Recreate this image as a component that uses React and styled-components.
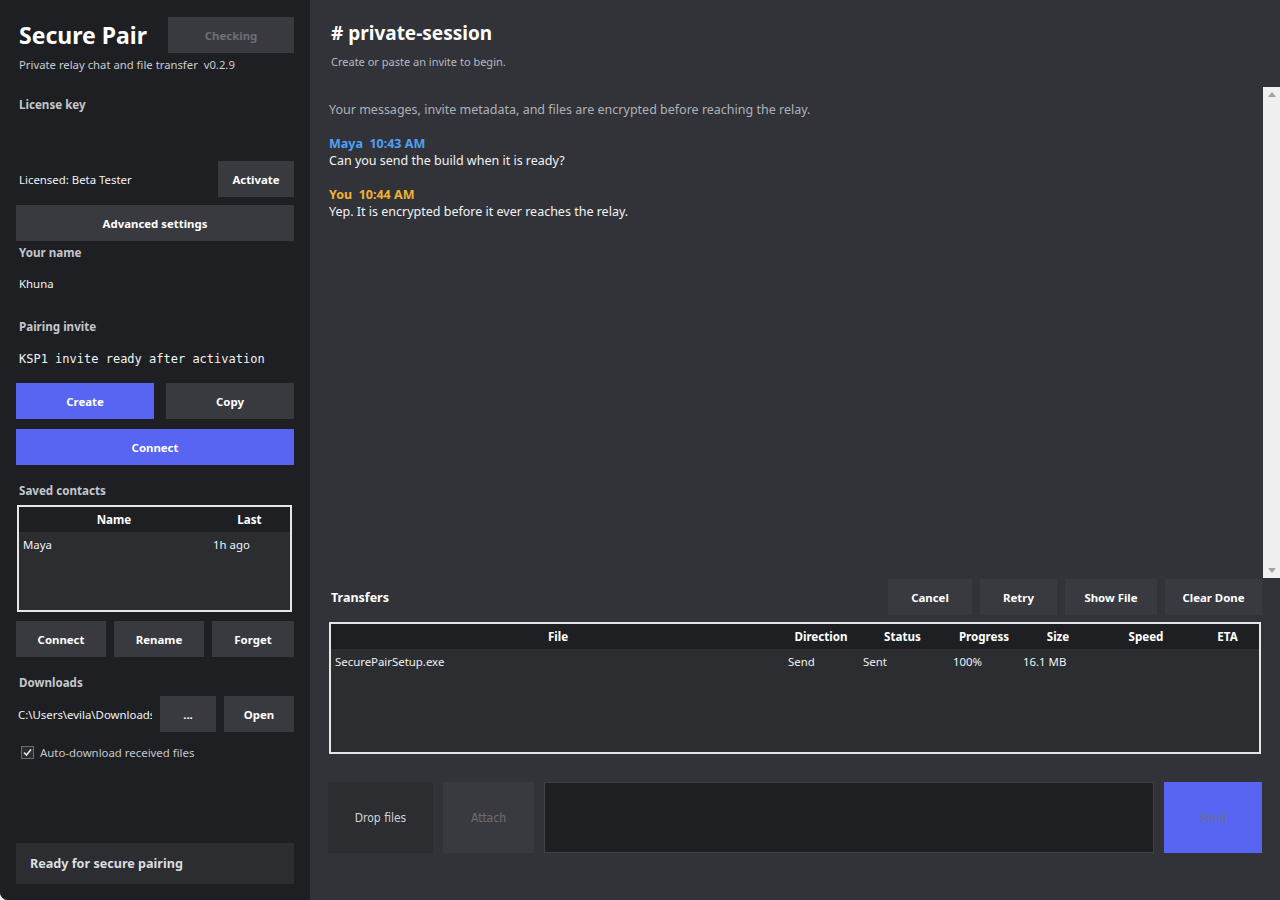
import React from "react"
import styled, { createGlobalStyle } from "styled-components"

const GlobalStyle = createGlobalStyle`
  html, body {
    margin: 0;
    padding: 0;
    background: #f0f0f0;
  }
  body {
    font-family: "Noto Sans", "Open Sans", sans-serif;
    font-size: 12px;
    color: #f2f3f5;
  }
  * {
    box-sizing: border-box;
  }
`

const StyledWindow = styled.div`
  width: 1280px;
  height: 900px;
  display: flex;
  overflow: hidden;
  border-bottom-left-radius: 8px;
  background: #313338;
`

const StyledSidebar = styled.aside`
  width: 310px;
  flex-shrink: 0;
  background: #1e1f22;
  padding: 17px 16px 16px;
  display: flex;
  flex-direction: column;
`

const StyledTitleRow = styled.div`
  display: flex;
  justify-content: space-between;
  align-items: center;
`

const StyledTitle = styled.h1`
  margin: 0 0 0 3px;
  font-size: 23px;
  font-weight: 700;
  color: #ffffff;
`

const StyledSubtitle = styled.div`
  margin: 4px 0 0 3px;
  font-size: 11.3px;
  color: #c9ccd1;
`

const StyledLabel = styled.div`
  margin: ${(p) => p.$m || "0"};
  padding-left: 3px;
  font-size: 11.6px;
  font-weight: 700;
  color: #c4c7cc;
`

const StyledValue = styled.div`
  margin: ${(p) => p.$m || "0"};
  padding-left: 3px;
  font-size: ${(p) => (p.$mono ? "12px" : "11.4px")};
  font-family: ${(p) => (p.$mono ? '"DejaVu Sans Mono", "Liberation Mono", monospace' : "inherit")};
  color: #f2f3f5;
  white-space: nowrap;
  overflow: hidden;
`

const StyledButton = styled.button`
  height: 36px;
  width: ${(p) => p.$w || "auto"};
  flex: ${(p) => (p.$grow ? "1" : "none")};
  border: none;
  margin: 0;
  padding: 0;
  font-family: inherit;
  font-size: 11.4px;
  font-weight: 700;
  color: ${(p) => (p.$muted ? "#6d6f75" : "#ffffff")};
  background: ${(p) => (p.$primary ? "#5865f2" : "#393a40")};
  cursor: pointer;
`

const StyledRow = styled.div`
  display: flex;
  align-items: center;
  gap: ${(p) => p.$gap || "8px"};
  margin: ${(p) => p.$m || "0"};
`

const StyledSpacer = styled.div`
  flex: 1;
`

const StyledTableFrame = styled.div`
  border: 2px solid #e6e6e6;
  background: #2b2d31;
  height: ${(p) => p.$h};
  margin: ${(p) => p.$m || "0"};
  overflow: hidden;
`

const StyledGridRow = styled.div`
  display: grid;
  grid-template-columns: ${(p) => p.$cols};
  height: 25px;
  align-items: center;
  background: ${(p) => (p.$head ? "#1e1f22" : "transparent")};
`

const StyledHeadCell = styled.div`
  text-align: center;
  font-size: 11.6px;
  font-weight: 700;
  color: #ffffff;
`

const StyledCell = styled.div`
  padding-left: ${(p) => p.$pad || "4px"};
  font-size: 11.4px;
  color: #f2f3f5;
  white-space: nowrap;
`

const StyledCheckRow = styled.label`
  display: flex;
  align-items: center;
  gap: 6px;
  margin: 13px 0 0 5px;
  font-size: 11.4px;
  color: #c4c7cc;
`

const StyledCheckbox = styled.span`
  width: 13px;
  height: 13px;
  border: 1px solid #6a6c72;
  background: #2b2d31;
  display: flex;
  align-items: center;
  justify-content: center;
`

const StyledStatus = styled.div`
  margin-top: auto;
  height: 41px;
  background: #2b2d31;
  display: flex;
  align-items: center;
  padding-left: 14px;
  font-size: 12.6px;
  font-weight: 700;
  color: #dbdee1;
`

const StyledMain = styled.main`
  flex: 1;
  display: flex;
  flex-direction: column;
  min-width: 0;
`

const StyledHeader = styled.header`
  padding: 20px 0 0 21px;
  height: 87px;
`

const StyledChannel = styled.h2`
  margin: 0;
  font-size: 19px;
  font-weight: 700;
  color: #ffffff;
`

const StyledHint = styled.div`
  margin-top: 8px;
  font-size: 11px;
  color: #b5bac1;
`

const StyledChatArea = styled.div`
  height: 491px;
  display: flex;
  margin-left: 19px;
`

const StyledMessages = styled.div`
  flex: 1;
  padding-top: 14px;
`

const StyledNotice = styled.div`
  font-size: 12.5px;
  color: #aeb2b8;
  margin-bottom: 17px;
`

const StyledMessage = styled.div`
  margin-bottom: 17px;
`

const StyledAuthor = styled.div`
  font-size: 12.5px;
  font-weight: 700;
  color: ${(p) => p.$color};
  line-height: 17px;
`

const StyledText = styled.div`
  font-size: 12.5px;
  color: #f2f3f5;
  line-height: 17px;
`

const StyledScrollbar = styled.div`
  width: 17px;
  background: #f0f0f0;
  display: flex;
  flex-direction: column;
  justify-content: space-between;
  align-items: center;
  padding: 5px 0;
`

const StyledArrow = styled.span`
  width: 0;
  height: 0;
  border-left: 4px solid transparent;
  border-right: 4px solid transparent;
  ${(p) =>
    p.$down
      ? "border-top: 5px solid #a3a3a3;"
      : "border-bottom: 5px solid #a3a3a3;"}
`

const StyledTransfers = styled.section`
  padding: 1px 18px 0 19px;
`

const StyledSectionTitle = styled.div`
  padding-left: 2px;
  font-size: 12.5px;
  font-weight: 700;
  color: #ffffff;
`

const StyledComposer = styled.div`
  display: flex;
  gap: 10px;
  margin: 28px 18px 0 18px;
  height: 71px;
`

const StyledComposeButton = styled.button`
  width: ${(p) => p.$w};
  border: none;
  margin: 0;
  font-family: "DejaVu Sans Condensed", "DejaVu Sans", sans-serif;
  font-stretch: condensed;
  font-size: 12px;
  color: ${(p) => p.$color};
  background: ${(p) => p.$bg};
`

const StyledInput = styled.div`
  flex: 1;
  background: #1e1f22;
  border: 1px solid #3f4147;
`

const transferCols = "454px 72px 91px 72px 76px 100px 1fr"
const contactCols = "190px 1fr"

const CheckIcon = () => (
  <svg width="11" height="11" viewBox="0 0 11 11">
    <path d="M2 5.5 L4.5 8 L9 2.5" fill="none" stroke="#e6e6e6" strokeWidth="1.6" />
  </svg>
)

const Sidebar = () => (
  <StyledSidebar>
    <StyledTitleRow>
      <StyledTitle>Secure Pair</StyledTitle>
      <StyledButton $w="126px" $muted>
        Checking
      </StyledButton>
    </StyledTitleRow>
    <StyledSubtitle>Private relay chat and file transfer&nbsp; v0.2.9</StyledSubtitle>
    <StyledLabel $m="25px 0 0">License key</StyledLabel>
    <StyledRow $m="49px 0 0">
      <StyledValue>Licensed: Beta Tester</StyledValue>
      <StyledSpacer />
      <StyledButton $w="76px">Activate</StyledButton>
    </StyledRow>
    <StyledButton $w="100%" style={{ marginTop: 8 }}>
      Advanced settings
    </StyledButton>
    <StyledLabel $m="4px 0 0">Your name</StyledLabel>
    <StyledValue $m="16px 0 0">Khuna</StyledValue>
    <StyledLabel $m="28px 0 0">Pairing invite</StyledLabel>
    <StyledValue $m="18px 0 0" $mono>
      KSP1 invite ready after activation
    </StyledValue>
    <StyledRow $gap="12px" $m="17px 0 0">
      <StyledButton $w="138px" $primary>
        Create
      </StyledButton>
      <StyledButton $grow>Copy</StyledButton>
    </StyledRow>
    <StyledButton $w="100%" $primary style={{ marginTop: 10 }}>
      Connect
    </StyledButton>
    <StyledLabel $m="18px 0 0">Saved contacts</StyledLabel>
    <StyledTableFrame $h="107px" $m="7px 2px 0 1px">
      <StyledGridRow $head $cols={contactCols}>
        <StyledHeadCell>Name</StyledHeadCell>
        <StyledHeadCell>Last</StyledHeadCell>
      </StyledGridRow>
      <StyledGridRow $cols={contactCols}>
        <StyledCell>Maya</StyledCell>
        <StyledCell $pad="4px">1h ago</StyledCell>
      </StyledGridRow>
    </StyledTableFrame>
    <StyledRow $m="9px 0 0">
      <StyledButton $w="90px">Connect</StyledButton>
      <StyledButton $w="90px">Rename</StyledButton>
      <StyledButton $grow>Forget</StyledButton>
    </StyledRow>
    <StyledLabel $m="18px 0 0">Downloads</StyledLabel>
    <StyledRow $m="6px 0 0">
      <StyledValue style={{ width: 136, paddingLeft: 2 }}>C:\Users\evila\Downloads</StyledValue>
      <StyledButton $w="56px">...</StyledButton>
      <StyledButton $grow>Open</StyledButton>
    </StyledRow>
    <StyledCheckRow>
      <StyledCheckbox>
        <CheckIcon />
      </StyledCheckbox>
      Auto-download received files
    </StyledCheckRow>
    <StyledStatus>Ready for secure pairing</StyledStatus>
  </StyledSidebar>
)

const Chat = () => (
  <StyledChatArea>
    <StyledMessages>
      <StyledNotice>
        Your messages, invite metadata, and files are encrypted before reaching the relay.
      </StyledNotice>
      <StyledMessage>
        <StyledAuthor $color="#4ea1f5">Maya&nbsp; 10:43 AM</StyledAuthor>
        <StyledText>Can you send the build when it is ready?</StyledText>
      </StyledMessage>
      <StyledMessage>
        <StyledAuthor $color="#f0b232">You&nbsp; 10:44 AM</StyledAuthor>
        <StyledText>Yep. It is encrypted before it ever reaches the relay.</StyledText>
      </StyledMessage>
    </StyledMessages>
    <StyledScrollbar>
      <StyledArrow />
      <StyledArrow $down />
    </StyledScrollbar>
  </StyledChatArea>
)

const Transfers = () => (
  <StyledTransfers>
    <StyledRow>
      <StyledSectionTitle>Transfers</StyledSectionTitle>
      <StyledSpacer />
      <StyledButton $w="84px">Cancel</StyledButton>
      <StyledButton $w="77px">Retry</StyledButton>
      <StyledButton $w="92px">Show File</StyledButton>
      <StyledButton $w="97px">Clear Done</StyledButton>
    </StyledRow>
    <StyledTableFrame $h="132px" $m="7px 1px 0 0">
      <StyledGridRow $head $cols={transferCols}>
        <StyledHeadCell>File</StyledHeadCell>
        <StyledHeadCell>Direction</StyledHeadCell>
        <StyledHeadCell>Status</StyledHeadCell>
        <StyledHeadCell>Progress</StyledHeadCell>
        <StyledHeadCell>Size</StyledHeadCell>
        <StyledHeadCell>Speed</StyledHeadCell>
        <StyledHeadCell>ETA</StyledHeadCell>
      </StyledGridRow>
      <StyledGridRow $cols={transferCols}>
        <StyledCell>SecurePairSetup.exe</StyledCell>
        <StyledCell $pad="3px">Send</StyledCell>
        <StyledCell $pad="6px">Sent</StyledCell>
        <StyledCell $pad="5px">100%</StyledCell>
        <StyledCell $pad="3px">16.1 MB</StyledCell>
        <StyledCell />
        <StyledCell />
      </StyledGridRow>
    </StyledTableFrame>
  </StyledTransfers>
)

const App = () => (
  <>
    <GlobalStyle />
    <StyledWindow>
      <Sidebar />
      <StyledMain>
        <StyledHeader>
          <StyledChannel># private-session</StyledChannel>
          <StyledHint>Create or paste an invite to begin.</StyledHint>
        </StyledHeader>
        <Chat />
        <Transfers />
        <StyledComposer>
          <StyledComposeButton $w="105px" $bg="#2b2d31" $color="#d0d3d8">
            Drop files
          </StyledComposeButton>
          <StyledComposeButton $w="91px" $bg="#393a40" $color="#6d6f75">
            Attach
          </StyledComposeButton>
          <StyledInput />
          <StyledComposeButton $w="98px" $bg="#5865f2" $color="#6b6e8e">
            Send
          </StyledComposeButton>
        </StyledComposer>
      </StyledMain>
    </StyledWindow>
  </>
)

export default App
